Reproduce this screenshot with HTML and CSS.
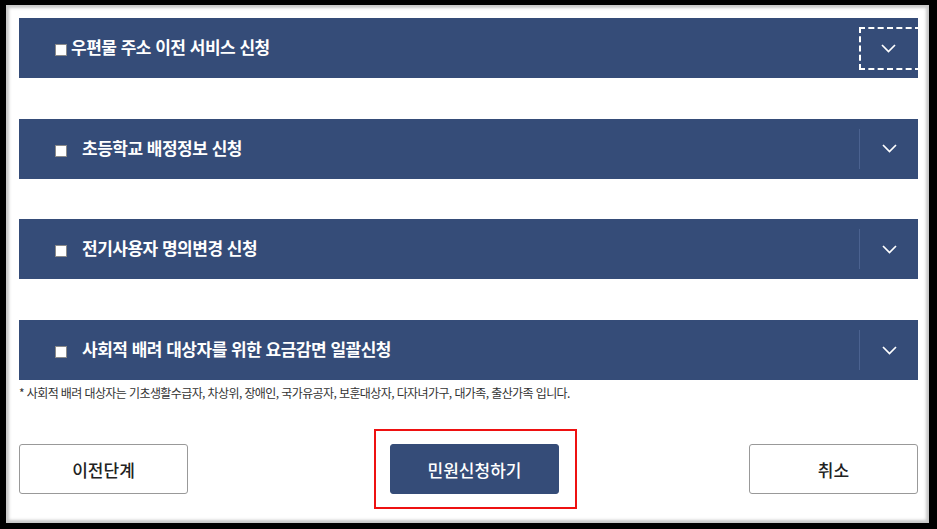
FILE: index.html
```html
<!DOCTYPE html>
<html lang="ko">
<head>
<meta charset="utf-8">
<link rel="stylesheet" href="styles.css">
</head>
<body>
<div class="sheet">
  <div class="list">
    <div class="bar">
      <span class="title tight"><span class="chk"></span>우편물 주소 이전 서비스 신청</span>
      <button class="toggle focus"><svg width="15" height="9" viewBox="0 0 15 9"><polyline points="1,1 7.5,7.5 14,1" fill="none" stroke="#fff" stroke-width="1.7"/></svg></button>
    </div>
    <div class="bar">
      <span class="title"><span class="chk"></span>초등학교 배정정보 신청</span>
      <button class="toggle"><svg width="15" height="9" viewBox="0 0 15 9"><polyline points="1,1 7.5,7.5 14,1" fill="none" stroke="#fff" stroke-width="1.7"/></svg></button>
    </div>
    <div class="bar">
      <span class="title"><span class="chk"></span>전기사용자 명의변경 신청</span>
      <button class="toggle"><svg width="15" height="9" viewBox="0 0 15 9"><polyline points="1,1 7.5,7.5 14,1" fill="none" stroke="#fff" stroke-width="1.7"/></svg></button>
    </div>
    <div class="bar">
      <span class="title"><span class="chk"></span>사회적 배려 대상자를 위한 요금감면 일괄신청</span>
      <button class="toggle"><svg width="15" height="9" viewBox="0 0 15 9"><polyline points="1,1 7.5,7.5 14,1" fill="none" stroke="#fff" stroke-width="1.7"/></svg></button>
    </div>
  </div>
  <p class="note">* 사회적 배려 대상자는 기초생활수급자, 차상위, 장애인, 국가유공자, 보훈대상자, 다자녀가구, 대가족, 출산가족 입니다.</p>
  <div class="actions">
    <button class="btn">이전단계</button>
    <span class="mark"><button class="btn primary">민원신청하기</button></span>
    <button class="btn">취소</button>
  </div>
</div>
</body>
</html>
```
FILE: styles.css
```css
html, body {
  margin: 0;
  padding: 0;
  background: #000;
}
body {
  width: 937px;
  height: 529px;
  overflow: hidden;
  font-family: "Noto Sans CJK KR", "Noto Sans", sans-serif;
}
.sheet {
  margin: 5px 0 0 6px;
  width: 923px;
  height: 518px;
  box-sizing: border-box;
  background: #fff;
  box-shadow: inset 0 0 3px 3px #c8c8c8;
  padding: 13px 11px 0 13px;
}
.list {
  display: flex;
  flex-direction: column;
  gap: 40.7px;
}
.bar {
  height: 60px;
  background: #354c78;
  display: flex;
  align-items: center;
  justify-content: space-between;
  padding-left: 36px;
  overflow: hidden;
}
.title {
  display: flex;
  align-items: center;
  color: #fff;
  font-size: 17px;
  line-height: 20px;
  font-weight: 700;
  letter-spacing: -0.5px;
  gap: 15px;
  margin-top: -2px;
}
.title.tight {
  gap: 4px;
}
.chk {
  width: 10px;
  height: 10px;
  background: #fff;
  border: 1px solid #8a8a8a;
  margin-top: 6px;
  flex: none;
}
.toggle {
  width: 59px;
  height: 40px;
  margin: 0;
  padding: 0;
  background: transparent;
  border: none;
  border-left: 1px solid #4b6290;
  display: flex;
  align-items: center;
  justify-content: center;
  flex: none;
}
.toggle.focus {
  width: 62px;
  height: 43px;
  border: 2px dashed #fff;
  margin-right: -3px;
  padding-left: 0;
  padding-right: 3px;
  box-sizing: border-box;
}
.note {
  margin: 5px 0 0;
  font-size: 12px;
  line-height: 16px;
  letter-spacing: -0.6px;
  color: #333;
}
.actions {
  margin-top: 28px;
  display: flex;
  justify-content: space-between;
  align-items: center;
}
.btn {
  width: 169px;
  height: 50px;
  background: #fff;
  border: 1px solid #999;
  border-radius: 3px;
  font-family: "Noto Sans CJK KR", "Noto Sans", sans-serif;
  font-size: 17px;
  font-weight: 500;
  letter-spacing: 0;
  color: #222;
  padding: 0;
}
.btn.primary {
  background: #354c78;
  border-color: #354c78;
  color: #fff;
  display: block;
}
.mark {
  margin-left: 14px;
  border: 2px solid #ee1111;
  padding: 13px 16px 13px 14px;
}
```
